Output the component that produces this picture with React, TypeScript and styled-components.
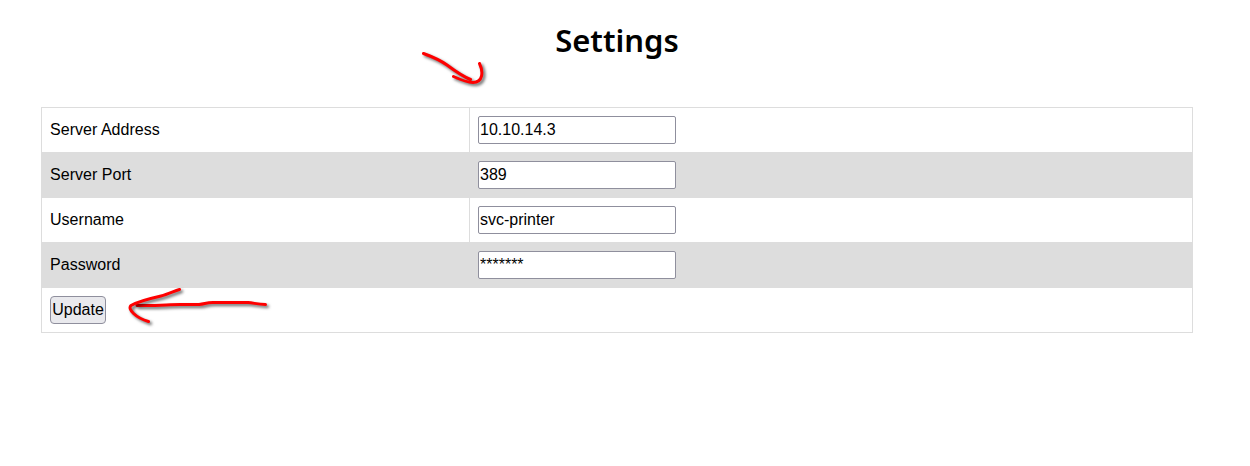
import React from "react";
import styled, { createGlobalStyle } from "styled-components";

const GlobalStyle = createGlobalStyle`
  * { box-sizing: border-box; }
  body {
    margin: 0;
    background: #fff;
    color: #000;
    font: 16px/24px "Liberation Sans", Arial, sans-serif;
  }
`;

const Page = styled.main`
  position: relative;
  min-height: 466px;
  padding: 19px 57px 0 41px;
`;

const Title = styled.h1`
  margin: 0 0 46px;
  text-align: center;
  font: 600 31px/42px "Noto Sans", "Open Sans", sans-serif;
`;

const Table = styled.div`
  display: flex;
  flex-direction: column;
  border: 1px solid #ddd;
`;

const Row = styled.div<{ $shaded?: boolean }>`
  display: flex;
  height: ${(p) => (p.$shaded ? 46 : 44)}px;
  background: ${(p) => (p.$shaded ? "#ddd" : "#fff")};
`;

const LabelCell = styled.label`
  display: flex;
  align-items: center;
  flex: 0 0 428px;
  padding: 0 8px;
  border-right: 1px solid #ddd;
  letter-spacing: 0.03px;
`;

const ValueCell = styled.div`
  display: flex;
  align-items: center;
  padding: 0 8px;
`;

const Field = styled.input`
  width: 198px;
  height: 28px;
  padding: 1px;
  border: 1px solid #8f8f9d;
  border-radius: 2px;
  background: #fff;
  color: #000;
  font: 16px/24px "Liberation Sans", Arial, sans-serif;
  outline: none;
`;

const UpdateButton = styled.button`
  width: 56px;
  height: 28px;
  padding: 0;
  border: 1px solid #8f8f9d;
  border-radius: 4px;
  background: #e9e9ed;
  color: #000;
  font: 16px/24px "Liberation Sans", Arial, sans-serif;
`;

const Annotations = styled.svg`
  position: absolute;
  top: 0;
  left: 0;
  pointer-events: none;
  fill: none;
  stroke: #fe0000;
  stroke-width: 3;
  stroke-linecap: round;
  stroke-linejoin: round;

  path { filter: drop-shadow(2px 2px 1.5px rgba(0, 0, 0, 0.6)); }
`;

const fields = [
  { id: "address", label: "Server Address", value: "10.10.14.3" },
  { id: "port", label: "Server Port", value: "389" },
  { id: "username", label: "Username", value: "svc-printer" },
  { id: "password", label: "Password", value: "*******" },
];

export default function App() {
  return (
    <Page>
      <GlobalStyle />
      <Title>Settings</Title>
      <Table>
        {fields.map((f, i) => (
          <Row key={f.id} $shaded={i % 2 === 1}>
            <LabelCell htmlFor={f.id}>{f.label}</LabelCell>
            <ValueCell>
              <Field id={f.id} type="text" defaultValue={f.value} spellCheck={false} />
            </ValueCell>
          </Row>
        ))}
        <Row>
          <ValueCell>
            <UpdateButton type="button">Update</UpdateButton>
          </ValueCell>
        </Row>
      </Table>
      <Annotations width="1250" height="466" viewBox="0 0 1250 466" aria-hidden="true">
        <path d="M423.5 53.5C433 57 440 60 447 65C455 71 462 76 470.5 79.5" />
        <path d="M453.5 76.5C460 79.5 467 82.5 473 82.5C483 82.5 483.5 72 479.5 63.5" />
        <path d="M137 305.5C158 306 168 304.5 180 304.5H199C205 304 206 302.5 213 302.5H248C254 303 258 304.5 265.5 304.5" />
        <path d="M179.5 289.5C174 291 168 294.5 161 296C150 298.5 137 302 131 305.5C127 309 136 318 148.5 321.5" />
      </Annotations>
    </Page>
  );
}
